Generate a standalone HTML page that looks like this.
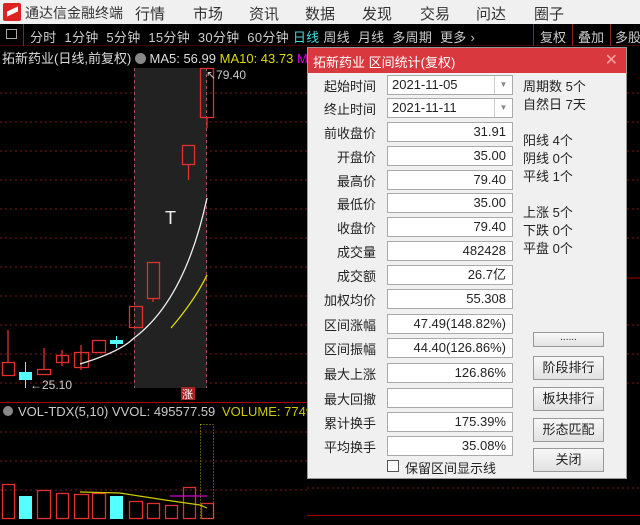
<!DOCTYPE html>
<html><head><meta charset="utf-8"><style>
*{margin:0;padding:0;box-sizing:border-box}
body{width:640px;height:525px;background:#000;overflow:hidden;position:relative;font-family:"Liberation Sans","Noto Sans CJK SC",sans-serif;font-size:13px}
.a{position:absolute;white-space:nowrap}
#menu{left:0;top:0;width:640px;height:24px;background:#f0f0f0;color:#333;font-size:14px}
#tb{left:0;top:24px;width:640px;height:22px;background:#000;color:#ccc;font-size:13px;border-bottom:1px solid #400}
#dlg{left:307px;top:47px;width:320px;height:432px;background:#f0f0f0;border:1px solid #999}
#dt{left:0;top:0;width:318px;height:25px;background:#d9393e;color:#fff;font-size:13px}
.l{right:250px;width:70px;text-align:right;color:#222;font-size:13px}
.in{left:79px;width:126px;height:20px;background:#fff;border:1px solid #aaa;text-align:right;padding-right:6px;line-height:18px;color:#222;font-size:13px}
.r{left:215px;color:#222;font-size:13px}
.b{left:225px;width:71px;height:24px;border:1px solid #999;background:linear-gradient(#f8f8f8,#e2e2e2);text-align:center;line-height:22px;color:#222;font-size:13px}
</style></head><body>
<div id="menu" class="a">
<div class="a" style="left:3px;top:3px;width:18px;height:18px;background:#d22;border-radius:2px"></div>
<div class="a" style="left:7px;top:9px;width:11px;height:5px;background:#fff;transform:skewY(-25deg)"></div>
<div class="a" style="left:25px;top:3px">通达信金融终端</div>
<div class="a" style="left:135px;top:3px;font-size:15px">行情</div>
<div class="a" style="left:193px;top:3px;font-size:15px">市场</div>
<div class="a" style="left:249px;top:3px;font-size:15px">资讯</div>
<div class="a" style="left:305px;top:3px;font-size:15px">数据</div>
<div class="a" style="left:362px;top:3px;font-size:15px">发现</div>
<div class="a" style="left:420px;top:3px;font-size:15px">交易</div>
<div class="a" style="left:476px;top:3px;font-size:15px">问达</div>
<div class="a" style="left:534px;top:3px;font-size:15px">圈子</div>
</div>
<div id="tb" class="a">
<div class="a" style="left:0;top:0;width:24px;height:22px;border-right:1px solid #822"></div>
<div class="a" style="left:6px;top:5px;width:11px;height:10px;border:1px solid #aaa"></div>
<div class="a" style="left:30px;top:3px;letter-spacing:0.3px">分时&nbsp; 1分钟&nbsp; 5分钟&nbsp; 15分钟&nbsp; 30分钟&nbsp; 60分钟 <span style="color:#4dd">日线</span> 周线&nbsp; 月线&nbsp; 多周期&nbsp; 更多 ›</div>
<div class="a" style="left:533px;top:0;height:22px;border-left:1px solid #822"></div>
<div class="a" style="left:540px;top:3px">复权</div>
<div class="a" style="left:572px;top:0;height:22px;border-left:1px solid #822"></div>
<div class="a" style="left:578px;top:3px">叠加</div>
<div class="a" style="left:610px;top:0;height:22px;border-left:1px solid #822"></div>
<div class="a" style="left:615px;top:3px">多股</div>
</div>
<div class="a" style="left:2px;top:48px;color:#ddd;font-size:13px">拓新药业(日线,前复权) <span style="display:inline-block;width:11px;height:11px;border-radius:50%;background:#888;vertical-align:-1px"></span> MA5: 56.99 <span style="color:#dd0">MA10: 43.73</span> <span style="color:#c0c">M</span></div>
<svg class="a" style="left:0;top:0" width="640" height="525">
<g stroke="#7a1a1a" stroke-dasharray="2,3" stroke-width="1">
<line x1="0" y1="93" x2="307" y2="93"/><line x1="0" y1="122" x2="307" y2="122"/><line x1="0" y1="151" x2="307" y2="151"/><line x1="0" y1="180" x2="307" y2="180"/><line x1="0" y1="209" x2="307" y2="209"/><line x1="0" y1="238" x2="307" y2="238"/><line x1="0" y1="267" x2="307" y2="267"/><line x1="0" y1="296" x2="307" y2="296"/><line x1="0" y1="325" x2="307" y2="325"/><line x1="0" y1="354" x2="307" y2="354"/><line x1="0" y1="383" x2="307" y2="383"/>
<line x1="0" y1="432" x2="307" y2="432"/><line x1="0" y1="461" x2="307" y2="461"/><line x1="0" y1="490" x2="307" y2="490"/>
<line x1="307" y1="488" x2="640" y2="488"/><line x1="627" y1="93" x2="640" y2="93"/><line x1="627" y1="122" x2="640" y2="122"/><line x1="627" y1="151" x2="640" y2="151"/><line x1="627" y1="180" x2="640" y2="180"/><line x1="627" y1="209" x2="640" y2="209"/><line x1="627" y1="238" x2="640" y2="238"/><line x1="627" y1="325" x2="640" y2="325"/><line x1="627" y1="354" x2="640" y2="354"/><line x1="627" y1="383" x2="640" y2="383"/>
</g>
<line x1="627" y1="278" x2="640" y2="278" stroke="#a00"/>
<rect x="134" y="68" width="73" height="320" fill="#222"/>
<g stroke="#a55" stroke-dasharray="3,3"><line x1="134.5" y1="68" x2="134.5" y2="388"/><line x1="206.5" y1="68" x2="206.5" y2="388"/></g>
<line x1="0" y1="402.5" x2="307" y2="402.5" stroke="#a00"/>
<line x1="307" y1="515.5" x2="640" y2="515.5" stroke="#a00"/>
<g fill="none" stroke="#e03030" stroke-width="1.3">
<rect x="200.5" y="68.5" width="13" height="49"/><line x1="207" y1="117" x2="207" y2="128"/>
<rect x="182.5" y="145.5" width="12" height="19"/><line x1="188.5" y1="164" x2="188.5" y2="180"/>
<rect x="147.5" y="262.5" width="12" height="36"/><line x1="153" y1="298" x2="153" y2="302"/>
<rect x="129.5" y="306.5" width="13" height="21"/>
<rect x="2.5" y="362.5" width="12" height="13"/><line x1="8" y1="330" x2="8" y2="362"/>
<rect x="37.5" y="369.5" width="13" height="5"/><line x1="44" y1="348" x2="44" y2="369"/>
<rect x="56.5" y="355.5" width="12" height="7"/><line x1="62" y1="350" x2="62" y2="366"/>
<rect x="74.5" y="352.5" width="14" height="15"/><line x1="81" y1="345" x2="81" y2="370"/>
<rect x="92.5" y="340.5" width="13" height="12"/>
<rect x="2.5" y="484.5" width="12" height="34"/><rect x="37.5" y="490.5" width="13" height="28"/><rect x="56.5" y="493.5" width="12" height="25"/><rect x="74.5" y="494.5" width="14" height="24"/><rect x="92.5" y="493.5" width="13" height="25"/><rect x="129.5" y="501.5" width="13" height="17"/><rect x="147.5" y="503.5" width="12" height="15"/><rect x="165.5" y="505.5" width="12" height="13"/><rect x="183.5" y="487.5" width="12" height="31"/><rect x="201.5" y="503.5" width="12" height="15"/>
</g>
<rect x="200.5" y="424.5" width="13" height="94" fill="none" stroke="#aa0" stroke-dasharray="1,2"/>
<g fill="#5ff"><rect x="19" y="372" width="13" height="8"/><rect x="25" y="362" width="1" height="26"/><rect x="110" y="340" width="13" height="4"/><rect x="116" y="336" width="1" height="12"/><rect x="19" y="496" width="13" height="23"/><rect x="110" y="496" width="13" height="23"/></g>
<path d="M80 364 Q120 352 134 338 Q185 300 207 198" fill="none" stroke="#eee" stroke-width="1.3"/>
<path d="M171 328 Q195 300 207 275" fill="none" stroke="#dd0" stroke-width="1.3"/>
<path d="M80 492 L120 493 L165 500 L200 505 L207 508" fill="none" stroke="#cc0" stroke-width="1.2"/>
<line x1="170" y1="496" x2="207" y2="496" stroke="#c0c" stroke-width="1.2"/>
<text x="30" y="389" fill="#ccc" font-size="12" font-family="Liberation Sans">←25.10</text>
<text x="206" y="79" fill="#ccc" font-size="12" font-family="Liberation Sans">↖79.40</text>
<text x="165" y="224" fill="#eee" font-size="18" font-family="Liberation Sans">T</text>
<rect x="181" y="387" width="14" height="13" fill="#a22"/>
<text x="182" y="398" fill="#fff" font-size="11" font-family="Noto Sans CJK SC">涨</text>
<circle cx="8" cy="411" r="5" fill="#888"/>
<text x="18" y="416" fill="#ccc" font-size="13" font-family="Liberation Sans">VOL-TDX(5,10) VVOL: 495577.59</text>
<text x="222" y="416" fill="#cc0" font-size="13" font-family="Liberation Sans">VOLUME: 7749</text>
</svg>
<div id="dlg" class="a">
<div id="dt" class="a"><div class="a" style="left:5px;top:4px">拓新药业 区间统计(复权)</div><div class="a" style="right:8px;top:2px;color:#f4a0a0;font-size:16px">✕</div></div>
<div class="a l" style="top:28px">起始时间</div><div class="a in" style="top:27px;text-align:left;padding-left:4px">2021-11-05<span style="position:absolute;right:0;top:0;width:18px;height:18px;border-left:1px solid #ccc;color:#888;font-size:8px;text-align:center">▼</span></div>
<div class="a l" style="top:51px">终止时间</div><div class="a in" style="top:50px;text-align:left;padding-left:4px">2021-11-11<span style="position:absolute;right:0;top:0;width:18px;height:18px;border-left:1px solid #ccc;color:#888;font-size:8px;text-align:center">▼</span></div>
<div class="a l" style="top:75px">前收盘价</div><div class="a in" style="top:74px">31.91</div>
<div class="a l" style="top:99px">开盘价</div><div class="a in" style="top:98px">35.00</div>
<div class="a l" style="top:123px">最高价</div><div class="a in" style="top:122px">79.40</div>
<div class="a l" style="top:146px">最低价</div><div class="a in" style="top:145px">35.00</div>
<div class="a l" style="top:170px">收盘价</div><div class="a in" style="top:169px">79.40</div>
<div class="a l" style="top:194px">成交量</div><div class="a in" style="top:193px">482428</div>
<div class="a l" style="top:218px">成交额</div><div class="a in" style="top:217px">26.7亿</div>
<div class="a l" style="top:242px">加权均价</div><div class="a in" style="top:241px">55.308</div>
<div class="a l" style="top:267px">区间涨幅</div><div class="a in" style="top:266px">47.49(148.82%)</div>
<div class="a l" style="top:291px">区间振幅</div><div class="a in" style="top:290px">44.40(126.86%)</div>
<div class="a l" style="top:316px">最大上涨</div><div class="a in" style="top:315px">126.86%</div>
<div class="a l" style="top:341px">最大回撤</div><div class="a in" style="top:340px"></div>
<div class="a l" style="top:365px">累计换手</div><div class="a in" style="top:364px">175.39%</div>
<div class="a l" style="top:389px">平均换手</div><div class="a in" style="top:388px">35.08%</div>
<div class="a" style="left:79px;top:412px;width:12px;height:12px;border:1px solid #555;background:#fff"></div>
<div class="a" style="left:97px;top:410px;color:#222">保留区间显示线</div>
<div class="a r" style="top:28px">周期数 5个</div><div class="a r" style="top:46px">自然日 7天</div>
<div class="a r" style="top:82px">阳线 4个</div><div class="a r" style="top:100px">阴线 0个</div><div class="a r" style="top:118px">平线 1个</div>
<div class="a r" style="top:154px">上涨 5个</div><div class="a r" style="top:172px">下跌 0个</div><div class="a r" style="top:190px">平盘 0个</div>
<div class="a b" style="top:284px;height:15px;line-height:10px;font-size:10px">......</div>
<div class="a b" style="top:308px">阶段排行</div>
<div class="a b" style="top:339px">板块排行</div>
<div class="a b" style="top:370px">形态匹配</div>
<div class="a b" style="top:400px">关闭</div>
</div>
</body></html>
